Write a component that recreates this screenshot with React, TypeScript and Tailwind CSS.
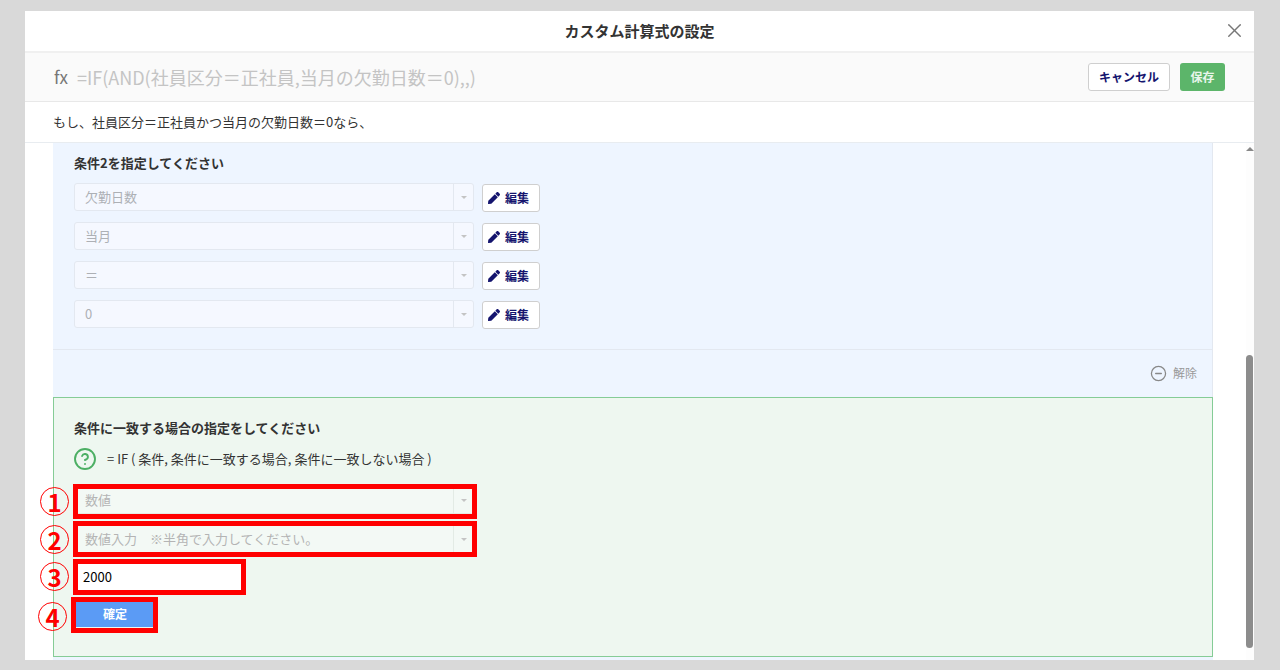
import { X, CircleHelp, CircleMinus } from 'lucide-react';
import { FaPen } from 'react-icons/fa';

const CONDITIONS = ['欠勤日数', '当月', '＝', '0'];

function SelectBox({ label, green }: { label: string; green?: boolean }) {
  return (
    <div className={`flex h-[28px] w-[400px] items-center rounded-[3px] border text-[13px] ${
      green ? 'border-[#e3ebe5] bg-[#f3f9f5] text-[#b4b4b4]' : 'border-[#e3e8f0] bg-[#f5f8ff] text-[#adb0b5]'
    }`}>
      <span className="flex-1 pl-[10px]">{label}</span>
      <span className={`flex h-full w-[20px] items-center justify-center border-l ${green ? 'border-[#e3ebe5]' : 'border-[#e3e8f0]'}`}>
        <span className="h-0 w-0 border-x-[3px] border-t-[3px] border-x-transparent border-t-[#c4c4c4]" />
      </span>
    </div>
  );
}

function ConditionRow({ label }: { label: string }) {
  return (
    <div className="flex items-start gap-[8px]">
      <SelectBox label={label} />
      <button className="mt-[1px] flex h-[28px] w-[58px] items-center gap-[5px] rounded-[3px] border border-[#cfcfcf] bg-white pl-[5px] text-[12px] font-bold text-[#14146e]">
        <FaPen className="h-[12px] w-[12px]" />
        編集
      </button>
    </div>
  );
}

function Marker({ n, className }: { n: string; className: string }) {
  return (
    <span className={`absolute flex h-[29px] w-[29px] items-center justify-center rounded-full border border-[#ff0000] text-[24px] leading-none font-bold text-[#ff0000] ${className}`}>
      {n}
    </span>
  );
}

export default function App() {
  return (
    <div
      className="relative h-[670px] w-[1280px] overflow-hidden bg-[#d9d9d9] pt-[11px] pl-[25px] text-[#333]"
      style={{ fontFamily: '"Noto Sans CJK JP", "Noto Sans", sans-serif' }}
    >
      <div className="flex h-[649px] w-[1229px] flex-col bg-white">
        <div className="relative flex h-[42px] items-center justify-center border-b-2 border-[#f0f0f0] text-[15px] font-bold">
          カスタム計算式の設定
          <X className="absolute top-[8px] right-[8px] h-[23px] w-[23px] text-[#777]" strokeWidth={1.5} />
        </div>

        <div className="flex h-[49px] items-center border-b border-[#e8e8e8] bg-[#fafafa] pr-[29px] pl-[29px]">
          <span className="text-[17px] text-[#777]">fx</span>
          <span className="ml-[9px] flex-1 text-[18px] text-[#c4c4c4]">=IF(AND(社員区分＝正社員,当月の欠勤日数＝0),,)</span>
          <button className="flex h-[28px] w-[82px] items-center justify-center rounded-[3px] border border-[#cfcfcf] bg-white text-[12px] font-bold text-[#14146e]">
            キャンセル
          </button>
          <button className="ml-[10px] flex h-[28px] w-[45px] items-center justify-center rounded-[3px] bg-[#5cb56a] text-[12px] font-bold text-[#e8f5ea]">
            保存
          </button>
        </div>

        <div className="flex h-[41px] items-center border-b border-[#e8ecf0] pl-[28px] text-[13px]">
          もし、社員区分＝正社員かつ当月の欠勤日数＝0なら、
        </div>

        <div className="flex min-h-0 flex-1 overflow-hidden">
          <div className="w-[28px] shrink-0" />
          <div className="w-[1160px] shrink-0 bg-[#eef5ff]">
            <div className="h-[254px] border-r border-[#e3e8f0]">
              <div className="flex h-[207px] flex-col border-b border-[#e3e8f0] pt-[10px] pl-[21px]">
                <p className="mb-[10px] h-[20px] text-[13px] leading-[20px] font-bold">条件2を指定してください</p>
                <div className="flex flex-col gap-[10px]">
                  {CONDITIONS.map(c => <ConditionRow key={c} label={c} />)}
                </div>
              </div>
              <div className="flex h-[46px] items-center justify-end gap-[6px] pr-[15px] text-[12px] text-[#999]">
                <CircleMinus className="h-[17px] w-[17px] text-[#888]" strokeWidth={1.8} />
                解除
              </div>
            </div>

            <div className="h-[260px] border border-[#85cc96] bg-[#eef7f0] pt-[20px] pl-[20px]">
              <p className="h-[20px] text-[13px] leading-[20px] font-bold">条件に一致する場合の指定をしてください</p>
              <div className="mt-[10px] flex h-[22px] items-center text-[13px]">
                <CircleHelp className="-ml-[1px] h-[24px] w-[24px] text-[#4caf64]" strokeWidth={1.9} />
                <span className="ml-[10px]">= IF ( 条件, 条件に一致する場合, 条件に一致しない場合 )</span>
              </div>
              <div className="mt-[16px] flex flex-col gap-[11px]">
                <SelectBox label="数値" green />
                <SelectBox label="数値入力　※半角で入力してください。" green />
              </div>
              <div className="mt-[11px] flex h-[26px] w-[168px] items-center bg-white pl-[9px] text-[13px] text-black">2000</div>
              <button className="mt-[11px] flex h-[26px] w-[82px] items-center justify-center bg-[#5b9bf5] text-[12px] font-bold text-white">
                確定
              </button>
            </div>
          </div>
          <div className="w-[33px] shrink-0" />
          <div className="relative w-[8px] shrink-0 bg-[#fdfdfd]">
            <span className="absolute top-[4px] left-0 h-0 w-0 border-x-[4px] border-b-[4px] border-x-transparent border-b-[#888]" />
            <span className="absolute top-[212px] left-0 h-[293px] w-[7px] rounded-full bg-[#8c8c8c]" />
          </div>
        </div>
      </div>

      <span className="absolute top-[484px] left-[73px] h-[35px] w-[404px] border-[5px] border-[#ff0000]" />
      <span className="absolute top-[521px] left-[73px] h-[36px] w-[404px] border-[5px] border-[#ff0000]" />
      <span className="absolute top-[559px] left-[73px] h-[36px] w-[173px] border-[5px] border-[#ff0000]" />
      <span className="absolute top-[597px] left-[71px] h-[36px] w-[87px] border-[5px] border-[#ff0000]" />
      <Marker n="1" className="top-[487px] left-[40px]" />
      <Marker n="2" className="top-[525px] left-[40px]" />
      <Marker n="3" className="top-[562px] left-[40px]" />
      <Marker n="4" className="top-[602px] left-[38px]" />
    </div>
  );
}
